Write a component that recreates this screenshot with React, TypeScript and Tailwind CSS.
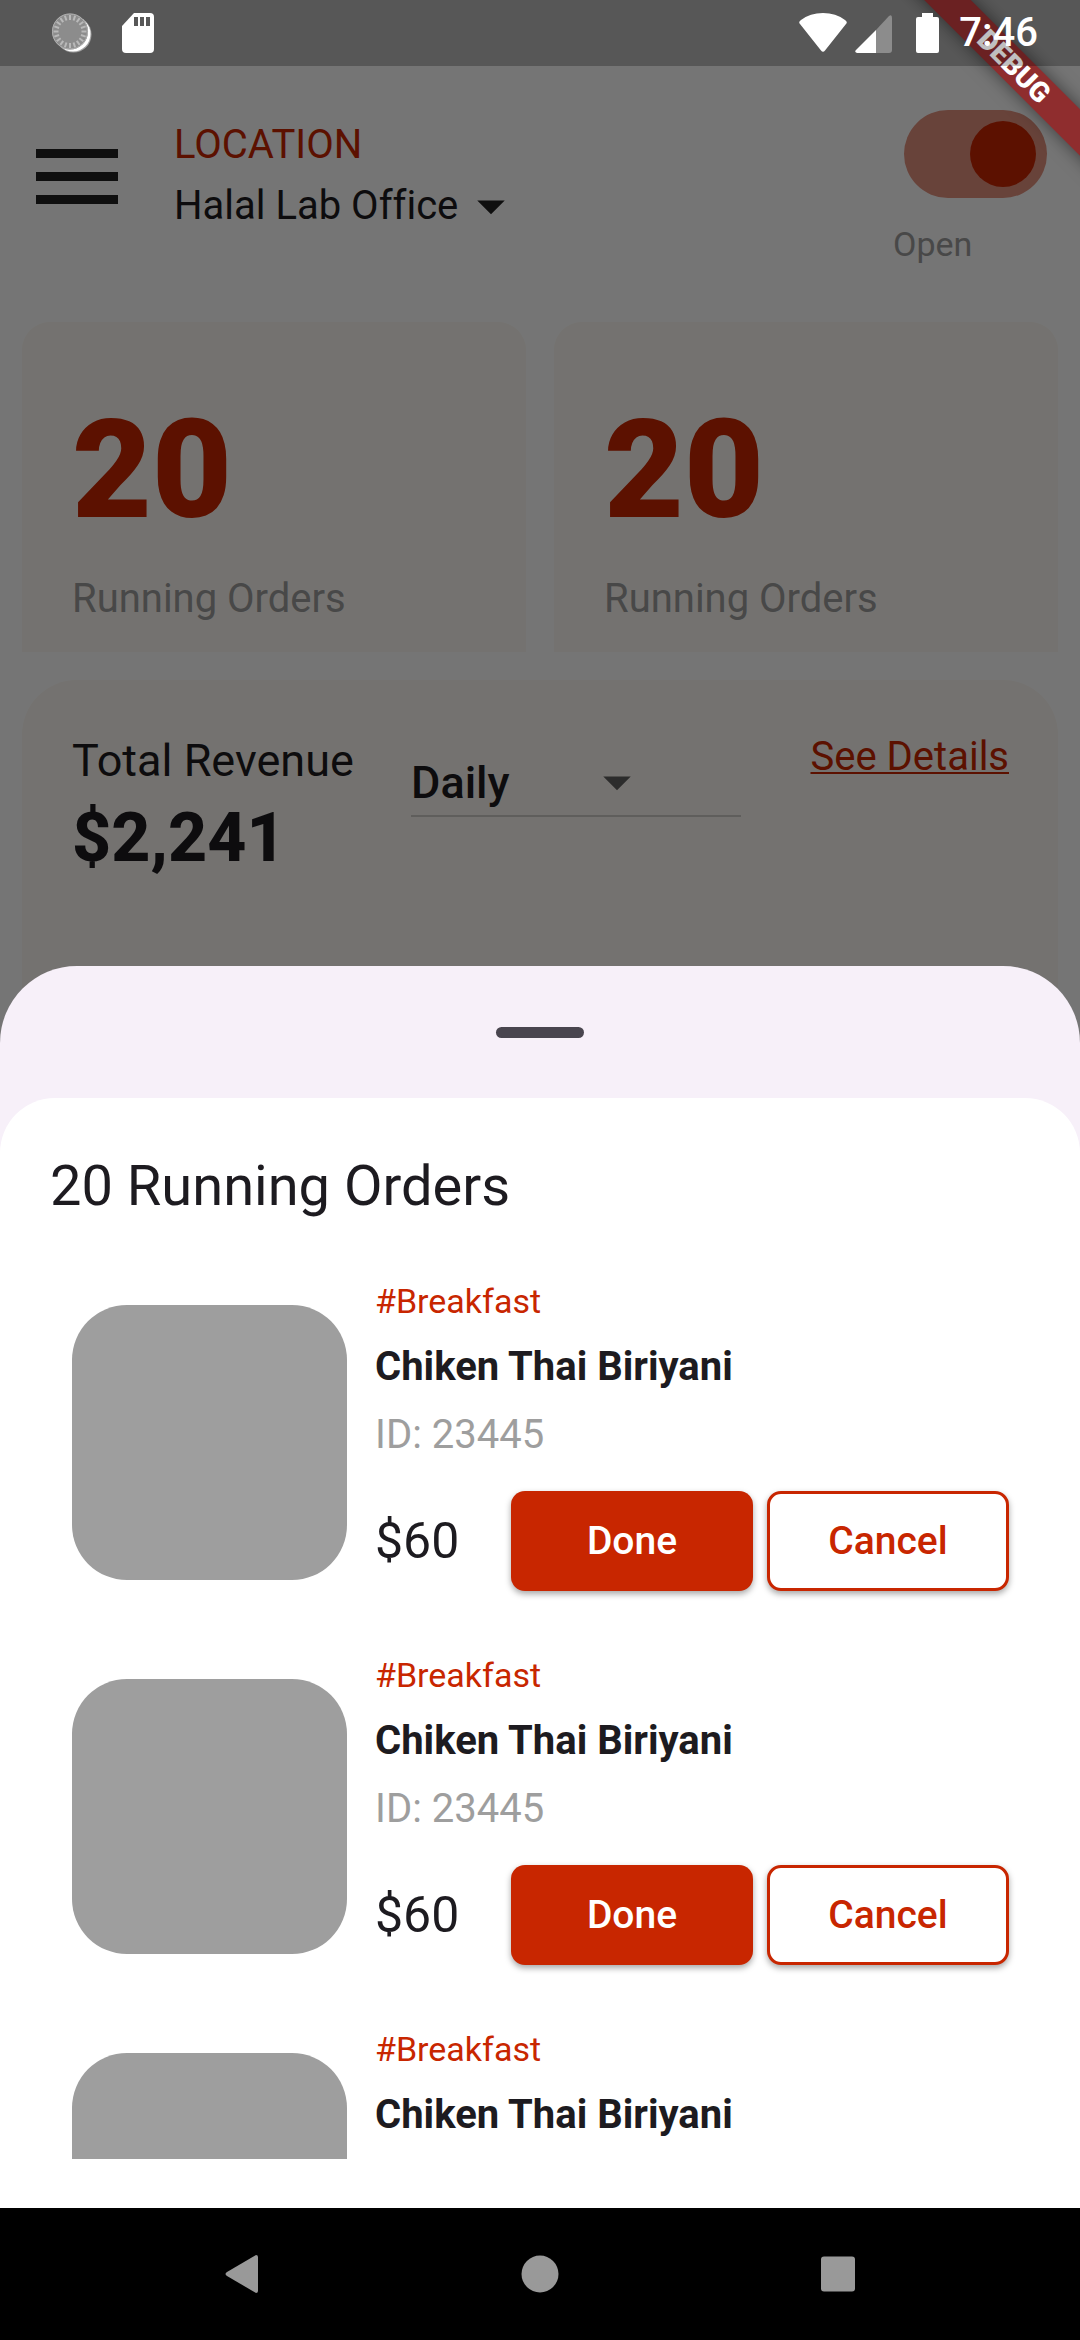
import { useState } from "react";

const stats = [
  { id: "running", value: "20", label: "Running Orders" },
  { id: "requests", value: "20", label: "Running Orders" },
];

const orders = [
  { key: 1, tag: "#Breakfast", name: "Chiken Thai Biriyani", id: "23445", price: "$60" },
  { key: 2, tag: "#Breakfast", name: "Chiken Thai Biriyani", id: "23445", price: "$60" },
  { key: 3, tag: "#Breakfast", name: "Chiken Thai Biriyani", id: "23445", price: "$60" },
];

const dialTicks = Array.from({ length: 20 }, (_, i) => i * 18);

function Caret({ className }: { className: string }) {
  return (
    <svg viewBox="0 0 24 24" className={className} fill="currentColor" aria-hidden="true">
      <path d="M7 10l5 5 5-5z" />
    </svg>
  );
}

function DialIcon() {
  return (
    <svg viewBox="0 0 40 40" className="size-10" aria-hidden="true">
      <circle cx="21.5" cy="21.5" r="18" fill="#fff" fillOpacity="0.45" />
      <circle cx="21" cy="21" r="17.5" fill="#fff" />
      <circle cx="18" cy="18.5" r="18" fill="#8c8c8c" />
      {dialTicks.map((a) => (
        <line
          key={a}
          x1="18"
          y1="2"
          x2="18"
          y2="7"
          stroke="#b9b9b9"
          strokeWidth="2"
          transform={`rotate(${a} 18 18.5)`}
        />
      ))}
      <circle cx="18" cy="18.5" r="17.5" fill="none" stroke="#b0b0b0" strokeWidth="1" />
    </svg>
  );
}

function SdCardIcon() {
  return (
    <svg viewBox="0 0 32 40" className="h-10 w-8" aria-hidden="true">
      <path d="M12 0h16a4 4 0 0 1 4 4v32a4 4 0 0 1-4 4H4a4 4 0 0 1-4-4V13z" fill="#fff" />
      <path d="M12 4h4v9h-4zM18 4h4v9h-4zM24 4h4v9h-4z" fill="#585858" />
    </svg>
  );
}

function StatusBar() {
  return (
    <div className="absolute inset-x-0 top-0 z-30 flex h-[66px] items-center bg-black/25 pr-[42px] pl-[52px] text-white">
      <div className="flex items-center gap-[30px]">
        <DialIcon />
        <SdCardIcon />
      </div>
      <div className="ml-auto flex items-center">
        <svg viewBox="0 0 48 40" className="mr-2 h-10 w-12" fill="#fff" aria-hidden="true">
          <path d="M1 11Q-1 9 2 7Q11 0 24 0Q37 0 46 7Q49 9 47 11L26 37.500Q24 40 22 37.500Z" />
        </svg>
        <svg viewBox="0 0 37 40" className="mr-6 h-10 w-[37px]" aria-hidden="true">
          <path d="M21 17L34 3Q37 1 37 5V37Q37 40 34 40H21Z" fill="#8c8c8c" />
          <path d="M21 17V40H2Q-1 39 1 37Z" fill="#fff" />
        </svg>
        <svg viewBox="0 0 23 40" className="mr-5 h-10 w-[23px]" fill="#fff" aria-hidden="true">
          <path d="M6 0H17V4H21Q23 4 23 6V38Q23 40 21 40H2Q0 40 0 38V6Q0 4 2 4H6Z" />
        </svg>
        <span className="text-[40px] leading-[44px] font-medium">7:46</span>
      </div>
    </div>
  );
}

function DebugBanner() {
  return (
    <div className="pointer-events-none absolute top-0 right-0 z-20 size-[190px] overflow-hidden" aria-hidden="true">
      <div className="absolute top-[50px] -right-[84px] flex h-[33px] w-[300px] rotate-45 items-center justify-center bg-[#8f2d2e] shadow-[0_0_17px_rgba(0,0,0,0.5)]">
        <span className="text-[28px] leading-[33px] font-black text-white">DEBUG</span>
      </div>
    </div>
  );
}

function Header() {
  const [open, setOpen] = useState(true);
  return (
    <header className="flex items-start pt-[44px] pr-[33px] pb-[54px] pl-[36px]">
      <button type="button" aria-label="Menu" className="mt-[39px] flex w-[82px] flex-col gap-[14px]">
        <span className="h-[9px] w-full bg-[#212121]" />
        <span className="h-[9px] w-full bg-[#212121]" />
        <span className="h-[9px] w-full bg-[#212121]" />
      </button>
      <div className="mt-[5px] ml-[56px] flex flex-col items-start">
        <span className="text-[40px] leading-[60px] text-[#c82600]">LOCATION</span>
        <button type="button" className="flex h-[62px] items-center text-[40px] leading-[62px]">
          Halal Lab Office
          <Caret className="size-[66px] text-[#212121]" />
        </button>
      </div>
      <div className="ml-auto flex w-[154px] flex-col">
        <input
          id="open-switch"
          type="checkbox"
          role="switch"
          checked={open}
          onChange={(e) => setOpen(e.target.checked)}
          className="flex h-[88px] w-[143px] appearance-none items-center self-end rounded-full bg-[#e0e0e0] p-[11px] before:size-[66px] before:rounded-full before:bg-[#9e9e9e] before:content-[''] checked:justify-end checked:bg-[#e3927f] checked:before:bg-[#c82600]"
        />
        <label htmlFor="open-switch" className="mt-[22px] text-[34px] leading-[48px] text-[#9e9e9e]">
          Open
        </label>
      </div>
    </header>
  );
}

function Dashboard() {
  return (
    <main className="flex h-full flex-col overflow-hidden bg-white pt-[66px] text-[#1d1b20]">
      <Header />
      <section className="grid grid-cols-2 gap-[28px] px-[22px]">
        {stats.map((s) => (
          <div key={s.id} className="rounded-t-[28px] bg-[#fdf9f3] px-[50px] pt-[52px] pb-[20px]">
            <p className="text-[138px] leading-[192px] font-black text-[#c82600]">{s.value}</p>
            <p className="text-[40px] leading-[66px] text-[#9e9e9e]">{s.label}</p>
          </div>
        ))}
      </section>
      <section className="mx-[22px] mt-[28px] flex flex-1 items-start rounded-t-[55px] bg-[#fdf9f3] pt-[51px] pr-[49px] pl-[50px]">
        <div className="w-[339px]">
          <h2 className="text-[45px] leading-[60px]">Total Revenue</h2>
          <p className="text-[68px] leading-[94px] font-extrabold">$2,241</p>
        </div>
        <div className="relative mt-[18px] w-[330px]">
          <select
            aria-label="Revenue period"
            defaultValue="Daily"
            className="h-[68px] w-full appearance-none border-b-2 border-[#d0cdc8] bg-transparent text-[45px] font-medium"
          >
            <option>Daily</option>
            <option>Weekly</option>
            <option>Monthly</option>
          </select>
          <Caret className="pointer-events-none absolute top-0 left-[173px] size-[66px] text-[#616161]" />
        </div>
        <a
          href="#details"
          className="ml-auto text-[40px] leading-[52px] text-[#c82600] underline decoration-2 underline-offset-2"
        >
          See Details
        </a>
      </section>
    </main>
  );
}

function OrderRow({ order }: { order: (typeof orders)[number] }) {
  return (
    <li className="flex items-center gap-[28px] py-[22px] pr-[21px] pl-[22px]">
      <div className="size-[275px] shrink-0 rounded-[55px] bg-[#9e9e9e]" />
      <div className="flex h-[330px] flex-1 flex-col">
        <span className="mb-2 text-[34px] leading-[48px] text-[#c82600]">{order.tag}</span>
        <h3 className="text-[40px] leading-[68px] font-bold">{order.name}</h3>
        <p className="text-[40px] leading-[68px] text-[#9e9e9e]">ID: {order.id}</p>
        <div className="mt-[22px] flex items-center gap-[14px]">
          <span className="mr-auto text-[50px] leading-[68px]">{order.price}</span>
          <button
            type="button"
            className="h-[100px] w-[242px] rounded-[14px] bg-[#c82600] text-[39px] font-medium text-white shadow-[0_3px_6px_rgba(0,0,0,0.35)]"
          >
            Done
          </button>
          <button
            type="button"
            className="h-[100px] w-[242px] rounded-[14px] border-[3px] border-[#c82600] bg-white text-[39px] font-medium text-[#c82600] shadow-[0_3px_6px_rgba(0,0,0,0.35)]"
          >
            Cancel
          </button>
        </div>
      </div>
    </li>
  );
}

function OrdersSheet() {
  return (
    <section
      role="dialog"
      aria-label="Running orders"
      className="absolute inset-x-0 bottom-0 z-10 flex h-[56.25%] flex-col rounded-t-[77px] bg-[#f7f0f9] text-[#1d1b20]"
    >
      <div className="flex h-[132px] shrink-0 items-center justify-center">
        <div className="h-[11px] w-[88px] rounded-full bg-[#49454f]" />
      </div>
      <div className="flex min-h-0 flex-1 flex-col rounded-t-[55px] bg-white px-[50px] pt-[51px] pb-[49px]">
        <h1 className="text-[56px] leading-[74px]">20 Running Orders</h1>
        <ul className="mt-8 min-h-0 flex-1 overflow-y-auto [scrollbar-width:none]">
          {orders.map((o) => (
            <OrderRow key={o.key} order={o} />
          ))}
        </ul>
      </div>
    </section>
  );
}

function NavigationBar() {
  return (
    <nav className="grid h-[132px] shrink-0 grid-cols-3 place-items-center bg-black px-[93px] text-[#999999]">
      <button type="button" aria-label="Back">
        <svg viewBox="0 0 38 38" className="size-[38px]" fill="currentColor">
          <path d="M33 0Q35 0 35 2V36Q35 38 33 38L4 21Q1 19 4 17Z" />
        </svg>
      </button>
      <button type="button" aria-label="Home">
        <svg viewBox="0 0 38 38" className="size-[38px]" fill="currentColor">
          <circle cx="19" cy="19" r="18.500" />
        </svg>
      </button>
      <button type="button" aria-label="Recent apps">
        <svg viewBox="0 0 38 38" className="size-[38px]" fill="currentColor">
          <rect x="2" y="1.500" width="34" height="35" rx="3" />
        </svg>
      </button>
    </nav>
  );
}

export default function App() {
  return (
    <div className="flex h-screen flex-col overflow-hidden font-['Roboto',sans-serif] [font-variant-ligatures:none]">
      <div className="relative min-h-0 flex-1">
        <Dashboard />
        <div className="absolute inset-0 bg-black/54" />
        <OrdersSheet />
        <DebugBanner />
        <StatusBar />
      </div>
      <NavigationBar />
    </div>
  );
}
